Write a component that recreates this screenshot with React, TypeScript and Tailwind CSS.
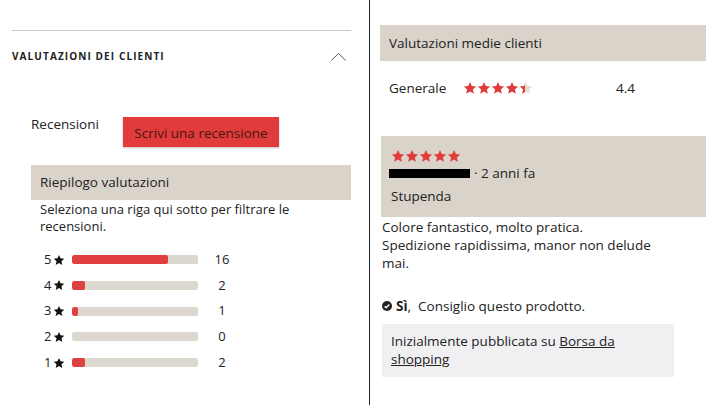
import React from "react";

const Star = ({ className }: { className?: string }) => (
  <svg viewBox="0 0 24 24" className={className} fill="currentColor">
    <path d="M12 1.8l3.1 6.9 7.4.7-5.6 5 1.7 7.4L12 17.9l-6.6 3.9 1.7-7.4-5.6-5 7.4-.7z" />
  </svg>
);

const bars = [
  { label: "5", count: 16, pct: 76 },
  { label: "4", count: 2, pct: 10 },
  { label: "3", count: 1, pct: 5 },
  { label: "2", count: 0, pct: 0 },
  { label: "1", count: 2, pct: 10 },
];

const App = () => {
  return (
    <div
      className="w-[720px] h-[405px] flex bg-white text-[#222] overflow-hidden"
      style={{ fontFamily: '"Open Sans", "Noto Sans", sans-serif' }}
    >
      {/* left column */}
      <div className="w-[370px] shrink-0 border-r border-[#222] pl-3 pr-[18px] pt-[30px]">
        <div className="border-t border-[#c8c8c8]" />
        <div className="flex items-center justify-between h-[50px] pr-1">
          <span className="text-[10px] font-bold tracking-[0.11em]">
            VALUTAZIONI DEI CLIENTI
          </span>
          <svg viewBox="0 0 18 10" className="w-[17px] h-[9px]" fill="none" stroke="#444" strokeWidth="1">
            <path d="M1 9.5L9 1.5l8 8" />
          </svg>
        </div>

        <div className="pl-[19px] pt-[36px]">
          <div className="flex items-start">
            <span className="text-[13.5px] w-[92px] -mt-[3px]">Recensioni</span>
            <button className="bg-[#e13b3b] text-[#4a1512] text-[13.5px] w-[156px] h-[30px] pt-[2px] shadow-[0_1px_2px_rgba(0,0,0,0.25)]">
              Scrivi una recensione
            </button>
          </div>

          <div className="mt-[18px] bg-[#d9d3c9] h-[35px] flex items-center pl-[9px] text-[13.5px]">
            Riepilogo valutazioni
          </div>
          <p className="pl-[9px] pt-[1px] text-[13px] leading-[17px] pr-8">
            Seleziona una riga qui sotto per filtrare le recensioni.
          </p>

          <div className="pl-[13px] pt-[16px] flex flex-col gap-[8.8px]">
            {bars.map((b) => (
              <div key={b.label} className="flex items-center h-[17px] text-[13px]">
                <span className="w-[28px] flex items-center gap-[2px]">
                  {b.label}
                  <Star className="w-[12px] h-[12px] text-[#111]" />
                </span>
                <div className="w-[126px] h-[9px] bg-[#dcd8d0] rounded-[2px] overflow-hidden">
                  <div
                    className="h-full bg-[#e04040] rounded-[2px]"
                    style={{ width: `${b.pct}%` }}
                  />
                </div>
                <span className="w-[44px] text-center pl-[4px]">{b.count}</span>
              </div>
            ))}
          </div>
        </div>
      </div>

      {/* right column */}
      <div className="flex-1 pl-[10px] pr-[14px] pt-[25px]">
        <div className="bg-[#d9d3c9] h-[36px] flex items-center pl-[9px] text-[13.5px]">
          Valutazioni medie clienti
        </div>
        <div className="flex items-center h-[54px] pl-[9px] text-[13.5px]">
          <span className="w-[74px]">Generale</span>
          <div className="flex w-[153px]">
            {[0, 1, 2, 3].map((i) => (
              <Star key={i} className="w-[14px] h-[14px] text-[#e03a3a]" />
            ))}
            <div className="relative w-[14px] h-[14px]">
              <Star className="w-[14px] h-[14px] text-[#e4ddd2]" />
              <div className="absolute inset-y-0 left-0 w-[6px] overflow-hidden">
                <Star className="w-[14px] h-[14px] text-[#e03a3a]" />
              </div>
            </div>
          </div>
          <span>4.4</span>
        </div>

        <div className="mt-[21px] ml-[1px] bg-[#d9d3c9] h-[81px] pl-[10px] pt-[13px]">
          <div className="flex">
            {[0, 1, 2, 3, 4].map((i) => (
              <Star key={i} className="w-[14px] h-[14px] text-[#e03a3a]" />
            ))}
          </div>
          <div className="flex items-center text-[13.5px] h-[17px] mt-[2px] -ml-[2px]">
            <span className="w-[81px] h-[9px] bg-black" />
            <span className="ml-[4px]">· 2 anni fa</span>
          </div>
          <div className="text-[13.5px] mt-[4px]">Stupenda</div>
        </div>

        <p className="pl-[2px] pt-[1px] text-[13.5px] leading-[18px] w-[280px]">
          Colore fantastico, molto pratica.
          <br />
          Spedizione rapidissima, manor non delude mai.
        </p>

        <div className="pl-[2px] mt-[24px] flex items-center text-[13.5px]">
          <svg viewBox="0 0 16 16" className="w-[10px] h-[10px] mr-[4px]">
            <circle cx="8" cy="8" r="8" fill="#222" />
            <path d="M4.2 8.3l2.5 2.4 5-5.2" stroke="#fff" strokeWidth="2.2" fill="none" />
          </svg>
          <span className="font-bold">Sì</span>
          <span>,&nbsp;&nbsp;Consiglio questo prodotto.</span>
        </div>

        <div className="mt-[8px] ml-[2px] w-[292px] h-[53px] bg-[#f0f0f3] pl-[9px] pt-[8px] text-[13.5px] leading-[18px]">
          Inizialmente pubblicata su <span className="underline">Borsa da</span>
          <br />
          <span className="underline">shopping</span>
        </div>
      </div>
    </div>
  );
};

export default App;
